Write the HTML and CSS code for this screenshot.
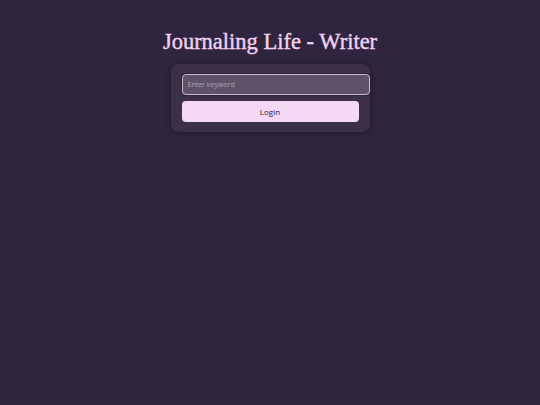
FILE: index.html
```html
<!DOCTYPE html>
<html>
<head>
<meta charset="utf-8">
<link rel="stylesheet" href="styles.css">
</head>
<body>
<div class="page">
  <h1 class="title">Journaling Life - Writer</h1>
  <form class="card">
    <input class="keyword" type="text" placeholder="Enter keyword">
    <button class="login" type="button">Login</button>
  </form>
</div>
</body>
</html>
```
FILE: styles.css
```css
html, body {
  margin: 0;
  padding: 0;
  background: #2f253f;
  height: 100%;
}
.page {
  display: flex;
  flex-direction: column;
  align-items: center;
  padding-top: 28px;
}
.title {
  margin: 0;
  font-family: "Liberation Serif", "DejaVu Serif", serif;
  font-weight: 400;
  font-size: 22.5px;
  line-height: 28px;
  color: #f2d2f0;
  -webkit-text-stroke: 0.4px #f2d2f0;
}
.card {
  margin-top: 8px;
  width: 177px;
  padding: 10px 11px 10px 11px;
  background: #3c3049;
  border-radius: 8px;
  box-shadow: 0 0 6px rgba(20, 12, 30, 0.5);
  display: flex;
  flex-direction: column;
  gap: 6px;
}
.keyword {
  box-sizing: border-box;
  width: 188px;
  height: 21px;
  margin: 0;
  padding: 0 5px;
  background: #5e5268;
  border: 1px solid #cbbccf;
  border-radius: 4px;
  box-shadow: 0 0 0 1px #2c2238;
  font-family: "Open Sans", "Inter", sans-serif;
  font-size: 7px;
  color: #efe6f2;
  outline: none;
}
.keyword::placeholder {
  color: #b0a3b8;
}
.login {
  box-sizing: border-box;
  width: 177px;
  height: 21px;
  margin: 0;
  border: none;
  border-radius: 4px;
  background: #f4d8f5;
  font-family: "Open Sans", "Inter", sans-serif;
  font-size: 8px;
  color: #2d2338;
  cursor: pointer;
}
```
